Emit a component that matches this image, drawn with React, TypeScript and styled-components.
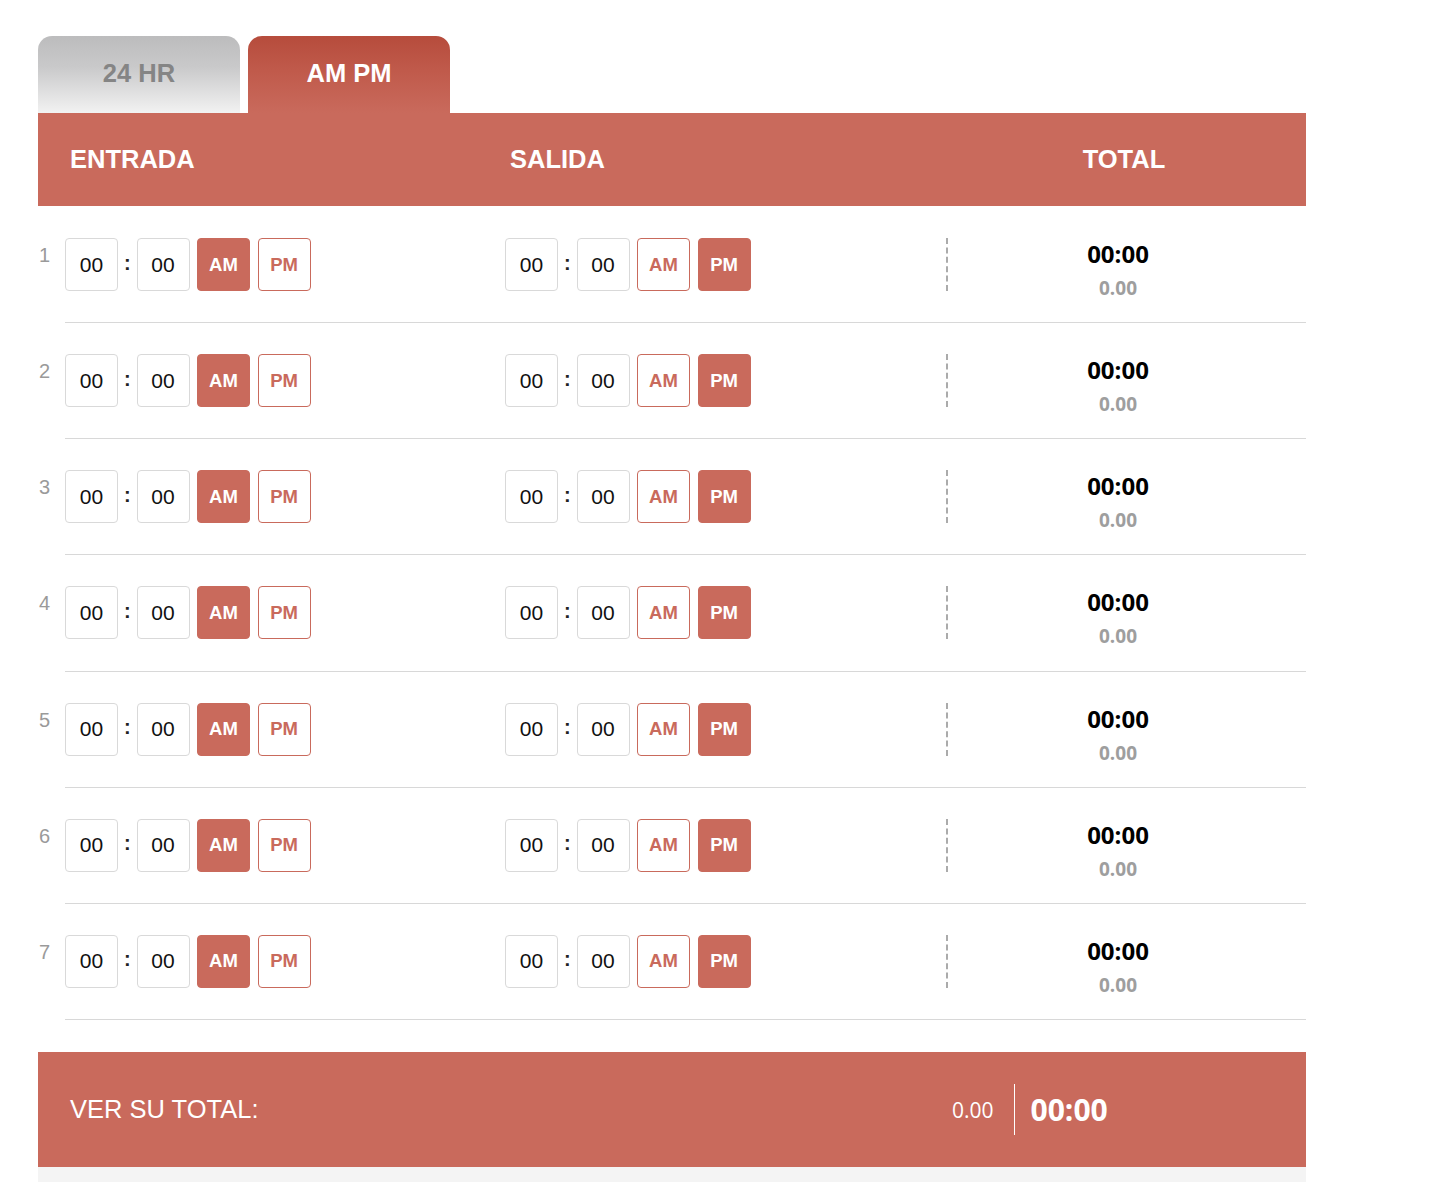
import { useState } from "react";
import styled, { createGlobalStyle } from "styled-components";

const GlobalStyle = createGlobalStyle`
  html, body {
    margin: 0;
    padding: 0;
    background: #ffffff;
    font-family: "Liberation Sans", Arial, sans-serif;
  }
`;

const RED = "#c96a5c";

const Page = styled.div`
  padding: 36px 0 0 38px;
`;

const Calculator = styled.div`
  width: 1268px;
`;

const Tabs = styled.div`
  display: flex;
  gap: 8px;
`;

const Tab = styled.button<{ $active?: boolean }>`
  width: 202px;
  height: 77px;
  border: none;
  border-radius: 14px 14px 0 0;
  font-family: "Liberation Sans", Arial, sans-serif;
  font-weight: 700;
  font-size: 25.5px;
  padding: 0 0 2px;
  cursor: pointer;
  color: ${(p) => (p.$active ? "#ffffff" : "#858585")};
  background: ${(p) =>
    p.$active
      ? "linear-gradient(to bottom, #b64c3c 0%, #c05a4b 45%, #c96a5c 100%)"
      : "linear-gradient(to bottom, #bcbcbd 0%, #c9c9ca 40%, #f2f2f2 100%)"};
`;

const HeaderBar = styled.div`
  display: grid;
  grid-template-columns: 440px 436px 1fr;
  align-items: center;
  height: 93px;
  padding-left: 32px;
  background: ${RED};
  color: #ffffff;
  font-weight: 700;
  font-size: 25.5px;
`;

const HeaderCell = styled.div<{ $center?: boolean }>`
  text-align: ${(p) => (p.$center ? "center" : "left")};
  padding-right: ${(p) => (p.$center ? "4px" : "0")};
`;

const RowList = styled.div`
  padding-top: 1px;
`;

const Row = styled.div`
  display: flex;
  height: 116.17px;
`;

const RowNum = styled.div`
  width: 27px;
  padding-top: 37px;
  padding-left: 1px;
  box-sizing: border-box;
  color: #9a9a9a;
  font-size: 20px;
`;

const RowBody = styled.div`
  flex: 1;
  display: grid;
  grid-template-columns: 440px 441px 1fr;
  align-items: start;
  padding-top: 31px;
  box-sizing: border-box;
  border-bottom: 1px solid #d8d8d8;
`;

const TimeGroup = styled.div`
  display: flex;
  align-items: center;
`;

const TimeBox = styled.div`
  width: 53px;
  height: 53px;
  box-sizing: border-box;
  border: 1px solid #d9d9d9;
  border-radius: 4px;
  display: flex;
  align-items: center;
  justify-content: center;
  font-size: 21px;
  color: #111111;
`;

const Colon = styled.span`
  width: 18.5px;
  text-align: center;
  font-weight: 700;
  font-size: 20px;
  color: #222222;
  padding-bottom: 3px;
`;

const MeridiemButton = styled.button<{ $active?: boolean }>`
  width: 53px;
  height: 53px;
  margin-left: 7.5px;
  box-sizing: border-box;
  border-radius: 4px;
  border: 1px solid ${RED};
  background: ${(p) => (p.$active ? RED : "#ffffff")};
  color: ${(p) => (p.$active ? "#ffffff" : RED)};
  font-family: "Liberation Sans", Arial, sans-serif;
  font-weight: 700;
  font-size: 18.5px;
  padding: 0;
  cursor: pointer;
`;

const TotalCell = styled.div`
  height: 53px;
  border-left: 2px dashed #ababab;
  display: flex;
  flex-direction: column;
  align-items: center;
  padding-right: 18px;
  font-family: "Open Sans", sans-serif;
  font-weight: 700;
`;

const TotalTime = styled.div`
  font-size: 24px;
  line-height: 28px;
  margin-top: 2px;
  color: #000000;
`;

const TotalHours = styled.div`
  font-size: 19px;
  line-height: 24px;
  margin-top: 8px;
  color: #9e9e9e;
`;

const Footer = styled.div`
  margin-top: 32px;
  height: 115px;
  display: flex;
  align-items: center;
  padding-left: 32px;
  background: ${RED};
  color: #ffffff;
`;

const FooterLabel = styled.div`
  flex: 1;
  font-size: 25.5px;
`;

const FooterSummary = styled.div`
  display: flex;
  align-items: center;
  width: 354px;
  font-family: "Open Sans", sans-serif;
`;

const FooterHours = styled.div`
  font-size: 21px;
  padding-right: 20px;
`;

const FooterDivider = styled.div`
  width: 1px;
  height: 51px;
  background: #ffffff;
  margin-right: 16px;
`;

const FooterTime = styled.div`
  font-size: 30px;
  font-weight: 700;
`;

const BottomStrip = styled.div`
  height: 20px;
  background: #f4f4f4;
`;

type Meridiem = "AM" | "PM";

function TimeInput({ value }: { value: Meridiem }) {
  return (
    <TimeGroup>
      <TimeBox>00</TimeBox>
      <Colon>:</Colon>
      <TimeBox>00</TimeBox>
      <MeridiemButton $active={value === "AM"}>AM</MeridiemButton>
      <MeridiemButton $active={value === "PM"}>PM</MeridiemButton>
    </TimeGroup>
  );
}

const rows = [1, 2, 3, 4, 5, 6, 7];

export default function App() {
  const [mode, setMode] = useState<"24" | "ampm">("ampm");

  return (
    <>
      <GlobalStyle />
      <Page>
        <Calculator>
          <Tabs>
            <Tab $active={mode === "24"} onClick={() => setMode("24")}>
              24 HR
            </Tab>
            <Tab $active={mode === "ampm"} onClick={() => setMode("ampm")}>
              AM PM
            </Tab>
          </Tabs>
          <HeaderBar>
            <HeaderCell>ENTRADA</HeaderCell>
            <HeaderCell>SALIDA</HeaderCell>
            <HeaderCell $center>TOTAL</HeaderCell>
          </HeaderBar>

          <RowList>
            {rows.map((n) => (
              <Row key={n}>
                <RowNum>{n}</RowNum>
                <RowBody>
                  <TimeInput value="AM" />
                  <TimeInput value="PM" />
                  <TotalCell>
                    <TotalTime>00:00</TotalTime>
                    <TotalHours>0.00</TotalHours>
                  </TotalCell>
                </RowBody>
              </Row>
            ))}
          </RowList>

          <Footer>
            <FooterLabel>VER SU TOTAL:</FooterLabel>
            <FooterSummary>
              <FooterHours>0.00</FooterHours>
              <FooterDivider />
              <FooterTime>00:00</FooterTime>
            </FooterSummary>
          </Footer>
          <BottomStrip />
        </Calculator>
      </Page>
    </>
  );
}
